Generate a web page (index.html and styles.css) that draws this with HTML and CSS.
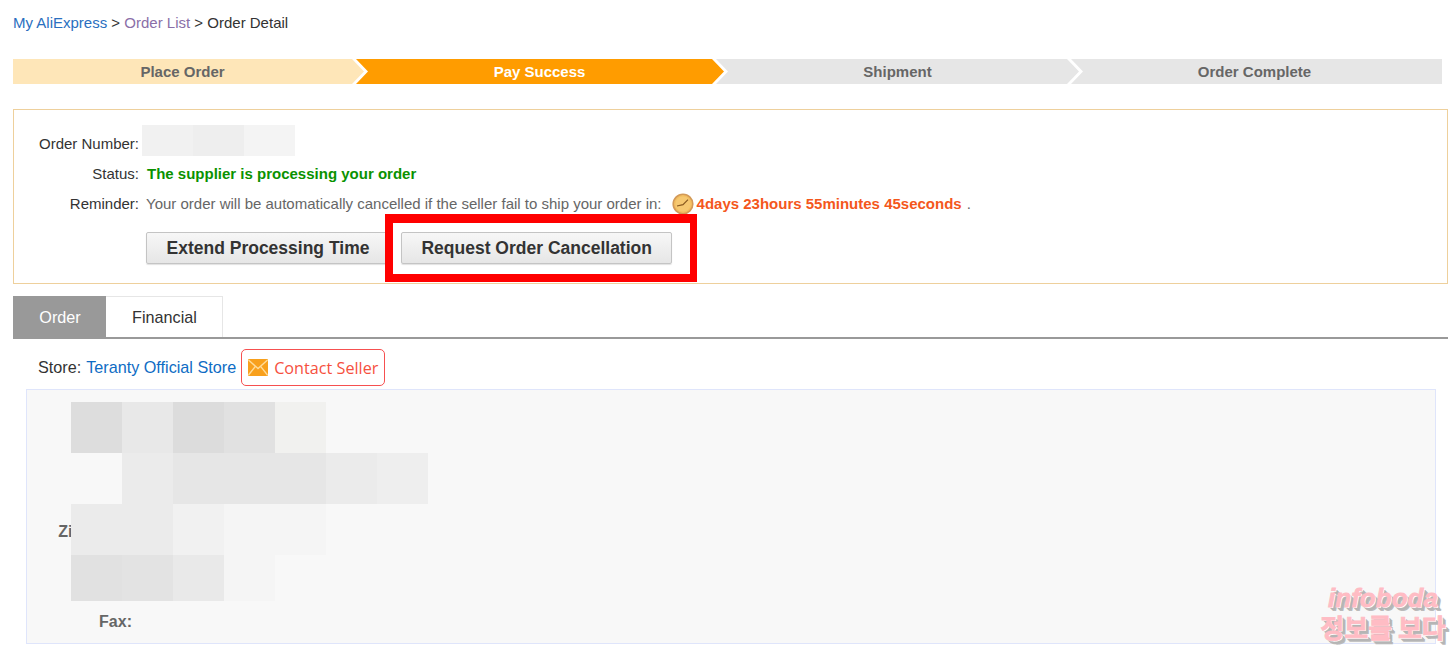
FILE: index.html
```html
<!DOCTYPE html>
<html lang="en">
<head>
<meta charset="utf-8">
<title>Order Detail</title>
<link rel="stylesheet" href="styles.css">
</head>
<body>
<nav class="crumbs"><a class="link" href="#">My AliExpress</a> &gt; <a class="link visited" href="#">Order List</a> &gt; <span>Order Detail</span></nav>

<ol class="steps">
  <li class="step step-done">Place Order</li>
  <li class="step step-current">Pay Success</li>
  <li class="step step-next">Shipment</li>
  <li class="step step-last">Order Complete</li>
</ol>

<section class="summary">
  <div class="row">
    <span class="label">Order Number:</span>
    <div class="mosaic-inline"><i class="c-a"></i><i class="c-b"></i><i class="c-c"></i></div>
  </div>
  <div class="row">
    <span class="label">Status:</span>
    <strong class="status">The supplier is processing your order</strong>
  </div>
  <div class="row">
    <span class="label">Reminder:</span>
    <div class="reminder">
      <span>Your order will be automatically cancelled if the seller fail to ship your order in:</span>
      <svg class="clock" viewBox="0 0 22 22" aria-hidden="true">
        <circle cx="11" cy="11" r="9.8" fill="#f3bf62" stroke="#d39a58" stroke-width="1.6"/>
        <circle cx="11" cy="11" r="7.6" fill="#f6c871"/>
        <path d="M5 13 L11 11.6 L16 6.6" fill="none" stroke="#8a5a20" stroke-width="1.2"/>
      </svg>
      <strong class="countdown">4days 23hours 55minutes 45seconds</strong>
      <span class="dot">.</span>
    </div>
  </div>
  <div class="actions">
    <button class="btn" type="button">Extend Processing Time</button>
    <button class="btn" type="button">Request Order Cancellation</button>
  </div>
</section>

<div class="tabs">
  <a class="tab tab-active" href="#">Order</a>
  <a class="tab" href="#">Financial</a>
</div>

<div class="store">
  <span>Store:</span>
  <a class="store-link" href="#">Teranty Official Store</a>
  <a class="contact" href="#">
    <svg class="mail" viewBox="0 0 20 17" aria-hidden="true">
      <rect width="20" height="17" rx="1" fill="#f8a01c"/>
      <path d="M0.5 1 L10 9.5 L19.5 1 M0.5 16 L7.4 7.4 M19.5 16 L12.6 7.4" fill="none" stroke="#ffdc9a" stroke-width="1.4"/>
    </svg>
    <span>Contact Seller</span>
  </a>
</div>

<section class="address">
  <div class="mosaic">
    <i class="m1"></i><i class="m3"></i><i class="m1b"></i><i class="m2"></i><i class="m8"></i><b></b><b></b>
    <b></b><i class="m5"></i><i class="m4"></i><i class="m4"></i><i class="m4"></i><i class="m5"></i><i class="m6"></i>
    <i class="m5"></i><i class="m5"></i><i class="m7"></i><i class="m9"></i><i class="m9"></i><b></b><b></b>
    <i class="m2"></i><i class="m2b"></i><i class="m3b"></i><i class="m9"></i><b></b><b></b><b></b>
  </div>
  <div class="addr-label">Zip Code:</div>
  <div class="addr-label fax">Fax:</div>
</section>

<div class="annotation"></div>
<div class="watermark">
  <div class="wm-en">infoboda</div>
  <div class="wm-ko">정보를 보다</div>
</div>
</body>
</html>
```
FILE: styles.css
```css
* { box-sizing: border-box; }
html, body { margin: 0; padding: 0; }
body {
  position: relative;
  height: 649px;
  overflow: hidden;
  background: #fff;
  color: #222;
  font-family: "Liberation Sans", Arial, sans-serif;
  font-size: 15px;
  line-height: 18px;
  padding: 14px 5px 0 13px;
}
a { text-decoration: none; }

.crumbs { height: 18px; color: #333; }
.link { color: #2a6fc0; }
.visited { color: #8a6fa8; }

.steps {
  display: flex;
  list-style: none;
  margin: 27px 0 0;
  padding: 0;
  width: 1429px;
  height: 25px;
  font-weight: 700;
  line-height: 26px;
  color: #666;
  text-align: center;
}
.step { flex: none; margin-right: -8px; background: #e6e6e6; }
.step-done {
  width: 351px;
  background: #fee6b8;
  clip-path: polygon(0 0, calc(100% - 12px) 0, 100% 50%, calc(100% - 12px) 100%, 0 100%);
  padding-right: 12px;
}
.step-current {
  width: 368px;
  padding-right: 1px;
  background: #ff9c00;
  color: #fff;
  clip-path: polygon(0 0, calc(100% - 12px) 0, 100% 50%, calc(100% - 12px) 100%, 0 100%, 12px 50%);
}
.step-next {
  width: 363px;
  clip-path: polygon(0 0, calc(100% - 12px) 0, 100% 50%, calc(100% - 12px) 100%, 0 100%, 12px 50%);
}
.step-last {
  flex: 1;
  margin-right: 0;
  padding-right: 4px;
  clip-path: polygon(0 0, 100% 0, 100% 100%, 0 100%, 12px 50%);
}

.summary {
  height: 175px;
  width: 1435px;
  margin-top: 25px;
  padding: 19px 0 0;
  border: 1px solid #eed09c;
}
.row {
  display: grid;
  grid-template-columns: 125px 1fr;
  column-gap: 7px;
  height: 30px;
  align-items: center;
}
.label { text-align: right; color: #333; }
.mosaic-inline {
  display: flex;
  align-self: start;
  margin: -4px 0 0 -4px;
  height: 31px;
}
.mosaic-inline i { width: 51px; height: 31px; }
.c-a { background: #f1f1f1; }
.c-b { background: #eeeeee; }
.c-c { background: #f4f4f4; }
.status { color: #0a9200; margin-left: 1px; }
.reminder { display: flex; align-items: center; color: #666; white-space: nowrap; }
.clock { width: 22px; height: 22px; margin-left: 10px; flex: none; }
.countdown { color: #f4571c; margin-left: 3px; }
.dot { margin-left: 5px; }

.actions {
  display: flex;
  gap: 11px;
  margin: 13px 0 0 132px;
}
.btn {
  height: 32px;
  padding: 0 19.5px;
  border: 1px solid #c4c4c4;
  border-radius: 2px;
  background: linear-gradient(#f7f7f7, #e6e6e6);
  box-shadow: 0 1px 1px rgba(0, 0, 0, .12);
  color: #333;
  font-family: inherit;
  font-size: 17.5px;
  font-weight: 700;
  line-height: 30px;
}

.tabs {
  display: flex;
  width: 1435px;
  height: 43px;
  margin-top: 12px;
  border-bottom: 2px solid #999;
  font-size: 16.2px;
}
.tab {
  display: block;
  width: 117px;
  height: 41px;
  padding-left: 1px;
  border: 1px solid #e6e6e6;
  border-bottom: 0;
  border-left: 0;
  color: #333;
  line-height: 40px;
  text-align: center;
}
.tab-active { width: 93px; background: #999; border: 0; color: #fff; line-height: 42px; }

.store {
  display: flex;
  align-items: center;
  height: 37px;
  margin: 10px 0 0 25px;
  font-size: 16.2px;
  color: #333;
}
.store > span, .store-link { margin-top: -1px; }
.store-link { color: #0e6cc4; margin-left: 5px; }
.contact {
  display: flex;
  align-items: center;
  height: 37px;
  margin-left: 5px;
  padding: 0 6px;
  border: 1px solid #f65050;
  border-radius: 5px;
  color: #f6503e;
  font-family: "Open Sans", sans-serif;
  font-size: 16.2px;
}
.mail { width: 20px; height: 17px; margin-right: 6px; flex: none; }

.address {
  position: relative;
  width: 1410px;
  height: 255px;
  margin: 3px 0 0 13px;
  padding-top: 132px;
  border: 1px solid #dfe5fb;
  background: #f8f8f8;
  color: #666;
  font-size: 16px;
  font-weight: 700;
}
.addr-label { width: 105px; height: 20px; line-height: 20px; text-align: right; white-space: nowrap; }
.fax { margin-top: 70px; }
.mosaic {
  position: absolute;
  left: 44px;
  top: 12px;
  display: grid;
  grid-template-columns: repeat(7, 51px);
  grid-template-rows: 51px 51px 51px 46px;
}
.m1 { background: #dddddd; }
.m1b { background: #dcdcdc; }
.m2 { background: #e1e1e1; }
.m2b { background: #e3e3e3; }
.m3 { background: #e8e8e8; }
.m3b { background: #e9e9e9; }
.m4 { background: #e6e6e6; }
.m5 { background: #ebebeb; }
.m6 { background: #eeeeee; }
.m7 { background: #f1f1f1; }
.m8 { background: #f1f1ef; }
.m9 { background: #f5f5f5; }

.annotation {
  position: absolute;
  left: 385px;
  top: 214px;
  width: 312px;
  height: 68px;
  border: solid #f00;
  border-width: 9px 7px 8px 8px;
}

.watermark {
  position: absolute;
  left: 1318px;
  top: 583px;
  width: 130px;
  text-align: center;
  color: #ffbcc4;
  font-weight: 700;
  white-space: nowrap;
  -webkit-text-stroke: 0.8px #ffbcc4;
  text-shadow: 1px 1px 0 #fff, 2px 2px 0 #b5b5b5, 3px 3px 0 #b5b5b5, 4px 4px 0 #bbb;
}
.wm-en {
  font-family: "Liberation Sans", sans-serif;
  font-style: italic;
  font-size: 26px;
  line-height: 30px;
}
.wm-ko {
  font-family: "Noto Sans CJK KR", sans-serif;
  font-size: 26px;
  line-height: 28px;
}
```
